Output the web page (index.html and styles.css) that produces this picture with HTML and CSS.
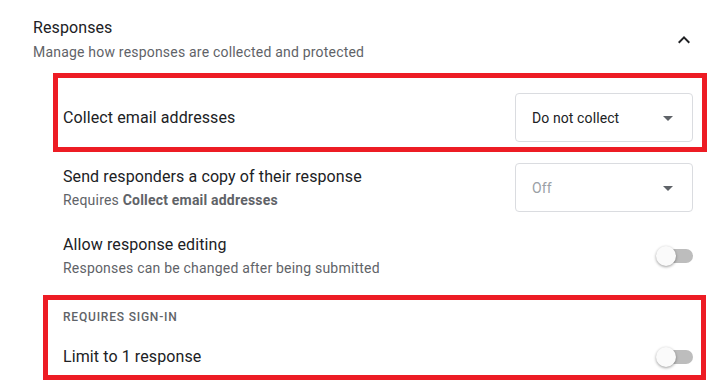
FILE: index.html
```html
<!DOCTYPE html>
<html lang="en">
<head>
  <meta charset="UTF-8" />
  <title>Responses settings</title>
  <link rel="stylesheet" href="styles.css">
</head>
<body>
  <div class="settings">
    <div class="section-header">
      <div>
        <div class="section-title">Responses</div>
        <div class="section-sub">Manage how responses are collected and protected</div>
      </div>
      <svg class="chevron" viewBox="0 0 24 24" width="24" height="24">
        <path d="M12 8l-6 6 1.41 1.41L12 10.83l4.59 4.58L18 14z" fill="#202124"/>
      </svg>
    </div>

    <div class="row highlight first">
      <div class="row-title">Collect email addresses</div>
      <div class="select">
        <span>Do not collect</span>
        <svg viewBox="0 0 24 24" width="24" height="24"><path d="M7 10l5 5 5-5z" fill="#5f6368"/></svg>
      </div>
    </div>

    <div class="row plain copy">
      <div>
        <div class="row-title">Send responders a copy of their response</div>
        <div class="row-sub">Requires <b>Collect email addresses</b></div>
      </div>
      <div class="select disabled">
        <span>Off</span>
        <svg viewBox="0 0 24 24" width="24" height="24"><path d="M7 10l5 5 5-5z" fill="#5f6368"/></svg>
      </div>
    </div>

    <div class="row plain editing">
      <div>
        <div class="row-title">Allow response editing</div>
        <div class="row-sub">Responses can be changed after being submitted</div>
      </div>
      <div class="toggle"></div>
    </div>

    <div class="highlight signin">
      <div class="group-label">REQUIRES SIGN-IN</div>
      <div class="row">
        <div class="row-title">Limit to 1 response</div>
        <div class="toggle"></div>
      </div>
    </div>
  </div>
</body>
</html>
```

FILE: styles.css
```css
* { box-sizing: border-box; }

body {
  margin: 0;
  font-family: Roboto, 'Noto Sans', sans-serif;
  color: #202124;
  background: #fff;
}

.section-header {
  display: flex;
  justify-content: space-between;
  align-items: center;
  padding: 16px 25px 0 33px;
}

.section-title {
  font-size: 16px;
  line-height: 24px;
  letter-spacing: 0.1px;
}

.section-sub {
  margin-top: 2px;
  font-size: 14px;
  line-height: 20px;
  letter-spacing: 0.2px;
  color: #5f6368;
}

.chevron {
  margin-top: 1px;
}

.row {
  display: flex;
  justify-content: space-between;
  align-items: center;
}

.row-title {
  font-size: 16px;
  line-height: 24px;
  letter-spacing: 0.1px;
}

.row-sub {
  margin-top: 1px;
  font-size: 14px;
  line-height: 20px;
  letter-spacing: 0.2px;
  color: #5f6368;
}

.row-sub b {
  font-weight: 700;
}

.highlight {
  border: 5px solid #ed1c24;
}

.first {
  margin: 11px 14px 0 53px;
  padding: 15px 9px 5px 5px;
}

.plain {
  margin: 0 28px 0 63px;
}

.copy {
  margin-top: 11px;
}

.editing {
  margin-top: 21px;
}

.signin {
  margin: 17px 15px 0 43px;
  padding: 9px 8px 6px 15px;
}

.group-label {
  font-size: 12px;
  line-height: 16px;
  font-weight: 500;
  letter-spacing: 0.8px;
  color: #5f6368;
  margin-bottom: 20px;
}

.select {
  width: 178px;
  height: 49px;
  border: 1px solid #dadce0;
  border-radius: 4px;
  display: flex;
  justify-content: space-between;
  align-items: center;
  padding: 0 12px 0 16px;
  font-size: 14px;
  letter-spacing: 0.1px;
}

.select.disabled span {
  color: #9aa0a6;
}

.toggle {
  position: relative;
  width: 36px;
  height: 14px;
  border-radius: 7px;
  background: #bdbdbd;
}

.toggle::before {
  content: "";
  position: absolute;
  left: -1px;
  top: -3px;
  width: 20px;
  height: 20px;
  border-radius: 50%;
  background: #fafafa;
  box-shadow: 0 1px 3px rgba(0, 0, 0, 0.4);
}
```
